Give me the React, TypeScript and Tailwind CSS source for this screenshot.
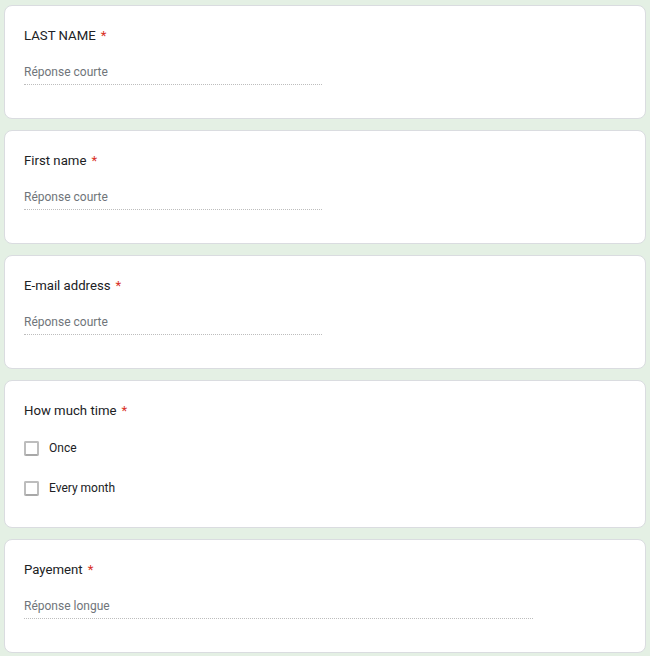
const FONT = { fontFamily: "Roboto, 'Noto Sans', Arial, sans-serif" };

function Title({ text }: { text: string }) {
  return (
    <div className="text-[13.2px] leading-[20px] text-[#202124]">
      {text}
      <span className="ml-[5px] text-[#d93025]">*</span>
    </div>
  );
}

function ShortQuestion({ title, placeholder, wide }: { title: string; placeholder: string; wide?: boolean }) {
  return (
    <div className="rounded-lg border border-[#dadce0] bg-white pl-[19px] pr-5 pt-5 pb-[33px]">
      <Title text={title} />
      <div
        className={`mt-[17px] border-b border-dotted border-[#bdbdbd] pb-[3px] text-[12px] leading-[18px] text-[#70757a] ${
          wide ? "w-[509px]" : "w-[298px]"
        }`}
      >
        {placeholder}
      </div>
    </div>
  );
}

function Check({ label }: { label: string }) {
  return (
    <div className="flex h-[20px] items-center gap-[10px]">
      <span className="h-[15px] w-[15px] rounded-[2px] border-2 border-[#bdbdbd] border-b-[#a8a8a8] bg-white" />
      <span className="text-[12px] leading-[18px] text-[#202124]">{label}</span>
    </div>
  );
}

export default function App() {
  return (
    <div className="min-h-[656px] bg-[#e4f0e4] px-1 pt-[5px]" style={FONT}>
      <div className="flex flex-col gap-[11px]">
        <ShortQuestion title="LAST NAME" placeholder="Réponse courte" />
        <ShortQuestion title="First name" placeholder="Réponse courte" />
        <ShortQuestion title="E-mail address" placeholder="Réponse courte" />
        <div className="rounded-lg border border-[#dadce0] bg-white pl-[19px] pr-5 pt-5 pb-[29px]">
          <Title text="How much time" />
          <div className="mt-[17px] flex flex-col gap-[20px]">
            <Check label="Once" />
            <Check label="Every month" />
          </div>
        </div>
        <ShortQuestion title="Payement" placeholder="Réponse longue" wide />
      </div>
    </div>
  );
}
